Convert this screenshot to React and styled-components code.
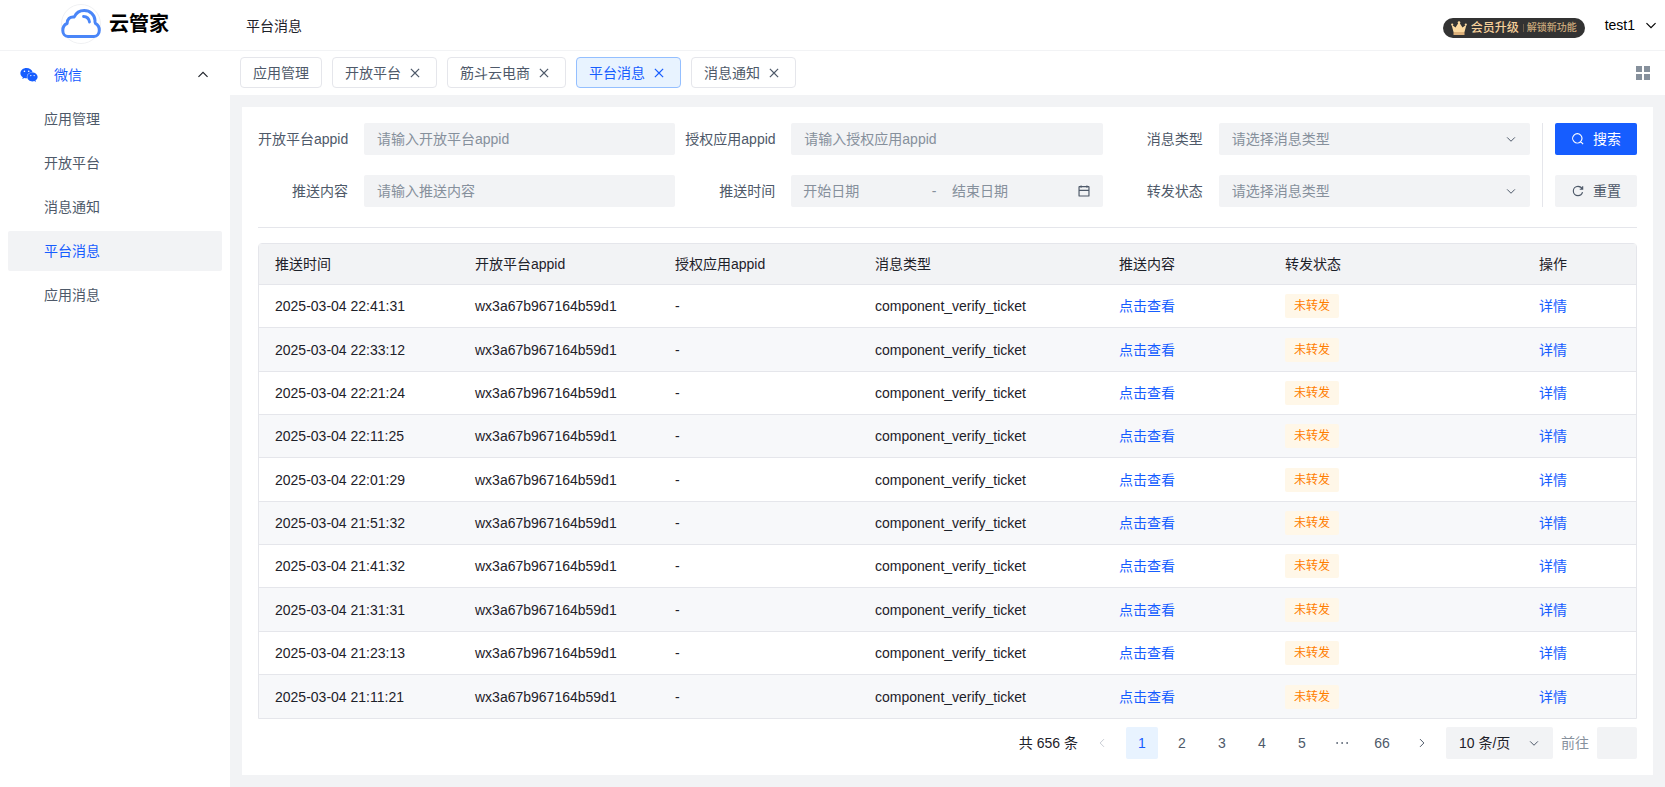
import React from "react";
import styled, { createGlobalStyle, css } from "styled-components";
import { FaWeixin } from "react-icons/fa";

const c = {
  text: "#1d2129",
  text2: "#4e5969",
  text3: "#86909c",
  text4: "#c9cdd4",
  border: "#e5e6eb",
  fill: "#f2f3f5",
  primary: "#165dff",
  primaryLight: "#e8f3ff",
};

const GlobalStyle = createGlobalStyle`
  * { box-sizing: border-box; }
  body {
    margin: 0;
    color: ${c.text};
    background: #fff;
    font-family: "Liberation Sans", "Noto Sans CJK SC", sans-serif;
    font-size: 14px;
    line-height: 22px;
  }
  button, input, select { font: inherit; color: inherit; border: 0; padding: 0; background: none; outline: none; }
  button { cursor: pointer; }
  a { color: ${c.primary}; text-decoration: none; }
  ul { list-style: none; margin: 0; padding: 0; }
`;

/* ---------- icons ---------- */

const Svg = styled.svg`
  display: block;
  flex: none;
  fill: none;
  stroke: currentColor;
  stroke-width: 4;
`;

const PATHS = {
  down: "M39.6 17.443 24.043 33 8.487 17.443",
  up: "M39.6 30.557 24.043 15 8.487 30.557",
  left: "M32 8.4 16.444 23.956 32 39.513",
  right: "m16 39.513 15.556-15.557L16 8.4",
  close: "M9.857 9.858 24 24m0 0 14.142 14.142M24 24 38.142 9.858M24 24 9.857 38.142",
  search:
    "M33.072 33.071c6.248-6.248 6.248-16.379 0-22.627-6.249-6.249-16.38-6.249-22.628 0-6.248 6.248-6.248 16.379 0 22.627 6.248 6.248 16.38 6.248 22.628 0Zm0 0 8.485 8.485",
  refresh:
    "M38.837 18C36.463 12.136 30.715 8 24 8 15.163 8 8 15.163 8 24s7.163 16 16 16c7.455 0 13.72-5.1 15.496-12M40 8v10H30",
  calendar:
    "M7 22h34M14 5v8m20-8v8M8 41h32a1 1 0 0 0 1-1V10a1 1 0 0 0-1-1H8a1 1 0 0 0-1 1v30a1 1 0 0 0 1 1Z",
  more: "M37 24h5M22 24h5M7 24h5",
};

const Icon = ({ name, size = 14 }) => (
  <Svg viewBox="0 0 48 48" width={size} height={size} aria-hidden="true">
    <path d={PATHS[name]} />
  </Svg>
);

const CloudLogo = () => (
  <svg width="40" height="40" viewBox="0 0 40 40" aria-hidden="true">
    <circle cx="20" cy="20" r="19.5" fill="#fff" stroke="#f0f1f3" strokeWidth="1" />
    <path
      d="M7 32.500C3.800 32.500 1.800 29.500 1.800 26.500c0-3.600 1.600-5.900 4.300-7C6 15 9 12.300 13.200 13 15 9 18.600 6.500 23.200 6.500c6 0 10.400 4.300 10.800 9.800-.2 1.200-.2 2.200.4 3 2.500 1.300 3.900 3.900 3.900 6.900 0 3.500-2.200 6.300-5.300 6.300Z"
      fill="none" stroke="#4a86f8" strokeWidth="3" strokeLinejoin="round"
    />
    <path d="M22.500 12.500c3.500.2 5.500 2.200 6 5.500" fill="none" stroke="#4a86f8" strokeWidth="2.800" strokeLinecap="round" />
  </svg>
);

const Crown = () => (
  <svg width="16" height="14" viewBox="0 0 16 14" aria-hidden="true">
    <path d="M.5 3.500 4.500 6.500 8 1l3.500 5.500 4-3L13.500 11h-11Z" fill="#fbd9a0" />
    <circle cx="8" cy="1.500" r="1.300" fill="#fbd9a0" />
    <circle cx="1.200" cy="3.500" r="1.100" fill="#fbd9a0" />
    <circle cx="14.800" cy="3.500" r="1.100" fill="#fbd9a0" />
    <path d="M2.500 11h11v3h-11Z" fill="#dcb07a" />
  </svg>
);

const GridIcon = () => (
  <svg width="14" height="14" viewBox="0 0 14 14" fill="currentColor" aria-hidden="true">
    <path d="M0 0h6v6H0ZM8 0h6v6H8ZM0 8h6v6H0ZM8 8h6v6H8Z" />
  </svg>
);

/* ---------- frame ---------- */

const Page = styled.div`
  display: flex;
  flex-direction: column;
  min-height: 100vh;
`;

const Header = styled.header`
  display: flex;
  align-items: center;
  height: 51px;
  padding-right: 7px;
  border-bottom: 1px solid ${c.fill};
`;

const Brand = styled.div`
  display: flex;
  align-items: center;
  justify-content: center;
  gap: 8px;
  width: 230px;
  padding-bottom: 2px;
  color: #000;
  font-size: 20px;
  font-weight: 700;
  line-height: 28px;
`;

const Title = styled.h1`
  flex: 1;
  margin: 0;
  padding: 2px 0 0 16px;
  font-size: 14px;
  font-weight: 400;
`;

const VipButton = styled.button`
  display: flex;
  align-items: center;
  gap: 4px;
  height: 20px;
  margin: 6px 20px 0 0;
  padding: 0 8px;
  border-radius: 10px;
  background: #333;
  color: #f6d09a;
  font-size: 12px;
  font-weight: 500;
  line-height: 20px;
`;

const VipNote = styled.span`
  display: flex;
  align-items: center;
  gap: 3px;
  color: #c9a77a;
  font-size: 10px;

  &::before {
    content: "";
    width: 1px;
    height: 8px;
    background: #6b5c48;
  }
`;

const UserButton = styled.button`
  display: flex;
  align-items: center;
  gap: 9px;
  color: #000;
`;

const Body = styled.div`
  display: flex;
  flex: 1;
`;

/* ---------- side menu ---------- */

const Sidebar = styled.nav`
  flex: none;
  width: 230px;
  padding: 4px 8px;
`;

const MenuGroup = styled.button`
  display: flex;
  align-items: center;
  gap: 16px;
  width: 100%;
  height: 40px;
  padding: 0 12px;
  color: ${c.primary};
  text-align: left;

  span { flex: 1; }
  ${Svg} { color: ${c.text}; }
`;

const MenuList = styled.ul`
  display: flex;
  flex-direction: column;
  gap: 4px;
  padding-top: 4px;
`;

const MenuLink = styled.a`
  display: block;
  padding: 0 36px;
  border-radius: 2px;
  line-height: 40px;
  color: ${(p) => (p.$active ? c.primary : c.text2)};
  background: ${(p) => (p.$active ? c.fill : "transparent")};
`;

/* ---------- tabs ---------- */

const Main = styled.main`
  display: flex;
  flex-direction: column;
  flex: 1;
  min-width: 0;
  background: ${c.fill};
`;

const TabBar = styled.div`
  display: flex;
  align-items: flex-start;
  gap: 10px;
  padding: 6px 15px 7px 10px;
  background: #fff;
`;

const Tab = styled.div`
  display: flex;
  align-items: center;
  gap: 6px;
  height: 31px;
  padding: 0 12px;
  border: 1px solid ${(p) => (p.$active ? "#94bfff" : c.border)};
  border-radius: 4px;
  color: ${(p) => (p.$active ? c.primary : c.text2)};
  background: ${(p) => (p.$active ? c.primaryLight : "#fff")};
  line-height: 28px;
  white-space: nowrap;
`;

const TabClose = styled.button`
  display: grid;
  place-items: center;
  width: 16px;
  height: 16px;
  margin-right: 1px;
`;

const GridButton = styled.button`
  display: flex;
  align-self: center;
  margin-left: auto;
  color: ${c.text3};
`;

/* ---------- content ---------- */

const Card = styled.section`
  flex: 1;
  margin: 12px;
  padding: 16px;
  background: #fff;
`;

const SearchForm = styled.form`
  display: flex;
  padding-bottom: 20px;
  margin-bottom: 15px;
  border-bottom: 1px solid ${c.border};
`;

const Fields = styled.div`
  display: grid;
  flex: 1;
  grid-template-columns: repeat(3, minmax(0, 1fr));
  gap: 20px 10px;
`;

const Field = styled.div`
  display: grid;
  grid-template-columns: 90px minmax(0, 1fr);
  align-items: center;
  column-gap: 16px;
`;

const Label = styled.label`
  color: ${c.text2};
  text-align: right;
  white-space: nowrap;
`;

const control = css`
  width: 100%;
  height: 32px;
  border-radius: 2px;
  background: ${c.fill};
`;

const TextInput = styled.input`
  ${control}
  min-width: 0;
  padding: 0 13px;
  &::placeholder { color: ${c.text3}; opacity: 1; }
`;

const SelectBox = styled.div`
  position: relative;
  min-width: 0;
  width: ${(p) => p.$width || "100%"};
  color: ${c.text2};

  ${Svg} {
    position: absolute;
    top: 10px;
    right: 13px;
    pointer-events: none;
  }
`;

const Select = styled.select`
  ${control}
  display: block;
  appearance: none;
  padding: 0 30px 0 13px;
  color: ${(p) => (p.$placeholder ? c.text3 : c.text)};
`;

const DateRange = styled.div`
  ${control}
  display: flex;
  align-items: center;
  padding: 0 12px 0 4px;
  color: ${c.text2};
`;

const DateInput = styled.input`
  flex: 1;
  min-width: 0;
  padding: 0 8px;
  &::placeholder { color: ${c.text3}; opacity: 1; }
`;

const DateDash = styled.span`
  width: 20px;
  text-align: center;
  color: ${c.text3};
`;

const DateButton = styled.button`
  display: flex;
  margin-left: 4px;
`;

const Actions = styled.div`
  display: flex;
  flex-direction: column;
  gap: 20px;
  margin-left: 12px;
  padding-left: 12px;
  border-left: 1px solid ${c.border};
`;

const ActionButton = styled.button`
  display: flex;
  align-items: center;
  justify-content: center;
  gap: 8px;
  width: 82px;
  height: 32px;
  border-radius: 2px;
  color: ${(p) => (p.$primary ? "#fff" : c.text2)};
  background: ${(p) => (p.$primary ? c.primary : c.fill)};
`;

/* ---------- table ---------- */

const Table = styled.table`
  width: 100%;
  table-layout: fixed;
  border: 1px solid ${c.border};
  border-radius: 4px 4px 0 0;
  border-collapse: separate;
  border-spacing: 0;
`;

const Th = styled.th`
  height: 41px;
  padding: 0 16px;
  border-bottom: 1px solid ${c.border};
  background: ${c.fill};
  font-weight: 400;
  text-align: left;
`;

const Td = styled.td`
  padding: 0 16px;
  border-bottom: 1px solid ${c.border};
`;

const Row = styled.tr`
  height: 43px;
  &:nth-child(3n + 2) { height: 44px; }
  &:nth-child(even) { background: #f7f8fa; }
  &:last-child ${Td} { border-bottom: 0; }
`;

const Tag = styled.span`
  display: block;
  width: fit-content;
  padding: 0 9px;
  border-radius: 2px;
  color: #ff7d00;
  background: #fff7e8;
  font-size: 12px;
  line-height: 24px;
`;

/* ---------- pagination ---------- */

const Pagination = styled.nav`
  display: flex;
  align-items: center;
  justify-content: flex-end;
  gap: 8px;
  margin-top: 8px;
`;

const PageButton = styled.button`
  display: grid;
  place-items: center;
  width: 32px;
  height: 32px;
  border-radius: 2px;
  color: ${(p) => (p.$active ? c.primary : c.text2)};
  background: ${(p) => (p.$active ? c.primaryLight : "transparent")};
  &:disabled { color: ${c.text4}; }
`;

const JumpLabel = styled.label`
  color: ${c.text3};
`;

const JumpInput = styled.input`
  ${control}
  width: 40px;
  padding: 0 8px;
  text-align: center;
`;

/* ---------- data ---------- */

const MENU = ["应用管理", "开放平台", "消息通知", "平台消息", "应用消息"];
const TABS = ["应用管理", "开放平台", "筋斗云电商", "平台消息", "消息通知"];
const CURRENT = "平台消息";

const COLUMNS = [
  ["推送时间", 200],
  ["开放平台appid", 200],
  ["授权应用appid", 200],
  ["消息类型", 244],
  ["推送内容", 166],
  ["转发状态", 254],
  ["操作", 113],
];

const TIMES = [
  "22:41:31", "22:33:12", "22:21:24", "22:11:25", "22:01:29",
  "21:51:32", "21:41:32", "21:31:31", "21:23:13", "21:11:21",
];

const TextField = ({ id, label, placeholder }) => (
  <Field>
    <Label htmlFor={id}>{label}</Label>
    <TextInput id={id} type="text" placeholder={placeholder} />
  </Field>
);

const SelectField = ({ id, label, placeholder }) => (
  <Field>
    <Label htmlFor={id}>{label}</Label>
    <SelectBox>
      <Select id={id} $placeholder defaultValue="">
        <option value="">{placeholder}</option>
      </Select>
      <Icon name="down" size={12} />
    </SelectBox>
  </Field>
);

export default function App() {
  return (
    <Page>
      <GlobalStyle />
      <Header>
        <Brand>
          <CloudLogo />
          云管家
        </Brand>
        <Title>平台消息</Title>
        <VipButton type="button">
          <Crown />
          会员升级
          <VipNote>解锁新功能</VipNote>
        </VipButton>
        <UserButton type="button">
          test1
          <Icon name="down" />
        </UserButton>
      </Header>
      <Body>
        <Sidebar aria-label="主菜单">
          <MenuGroup type="button" aria-expanded="true">
            <FaWeixin size={18} />
            <span>微信</span>
            <Icon name="up" />
          </MenuGroup>
          <MenuList>
            {MENU.map((m) => (
              <li key={m}>
                <MenuLink href="#" $active={m === CURRENT}>{m}</MenuLink>
              </li>
            ))}
          </MenuList>
        </Sidebar>
        <Main>
          <TabBar>
            {TABS.map((t, i) => (
              <Tab key={t} $active={t === CURRENT}>
                {t}
                {i > 0 && (
                  <TabClose type="button" aria-label={`关闭${t}`}>
                    <Icon name="close" />
                  </TabClose>
                )}
              </Tab>
            ))}
            <GridButton type="button" aria-label="标签操作">
              <GridIcon />
            </GridButton>
          </TabBar>
          <Card>
            <SearchForm onSubmit={(e) => e.preventDefault()}>
              <Fields>
                <TextField id="open-appid" label="开放平台appid" placeholder="请输入开放平台appid" />
                <TextField id="auth-appid" label="授权应用appid" placeholder="请输入授权应用appid" />
                <SelectField id="msg-type" label="消息类型" placeholder="请选择消息类型" />
                <TextField id="content" label="推送内容" placeholder="请输入推送内容" />
                <Field>
                  <Label htmlFor="date-start">推送时间</Label>
                  <DateRange>
                    <DateInput id="date-start" type="text" placeholder="开始日期" />
                    <DateDash>-</DateDash>
                    <DateInput type="text" placeholder="结束日期" aria-label="结束日期" />
                    <DateButton type="button" aria-label="选择日期">
                      <Icon name="calendar" />
                    </DateButton>
                  </DateRange>
                </Field>
                <SelectField id="forward" label="转发状态" placeholder="请选择消息类型" />
              </Fields>
              <Actions>
                <ActionButton type="submit" $primary>
                  <Icon name="search" />
                  搜索
                </ActionButton>
                <ActionButton type="reset">
                  <Icon name="refresh" />
                  重置
                </ActionButton>
              </Actions>
            </SearchForm>
            <Table>
              <colgroup>
                {COLUMNS.map(([name, width]) => (
                  <col key={name} width={width} />
                ))}
              </colgroup>
              <thead>
                <tr>
                  {COLUMNS.map(([name]) => (
                    <Th key={name} scope="col">{name}</Th>
                  ))}
                </tr>
              </thead>
              <tbody>
                {TIMES.map((t) => (
                  <Row key={t}>
                    <Td>2025-03-04 {t}</Td>
                    <Td>wx3a67b967164b59d1</Td>
                    <Td>-</Td>
                    <Td>component_verify_ticket</Td>
                    <Td><a href="#">点击查看</a></Td>
                    <Td><Tag>未转发</Tag></Td>
                    <Td><a href="#">详情</a></Td>
                  </Row>
                ))}
              </tbody>
            </Table>
            <Pagination aria-label="分页">
              <span>共 656 条</span>
              <PageButton type="button" disabled aria-label="上一页">
                <Icon name="left" size={12} />
              </PageButton>
              {[1, 2, 3, 4, 5].map((n) => (
                <PageButton key={n} type="button" $active={n === 1}>{n}</PageButton>
              ))}
              <PageButton type="button" aria-label="更多页">
                <Icon name="more" size={16} />
              </PageButton>
              <PageButton type="button">66</PageButton>
              <PageButton type="button" aria-label="下一页">
                <Icon name="right" size={12} />
              </PageButton>
              <SelectBox $width="107px">
                <Select aria-label="每页条数" defaultValue="10">
                  <option value="10">10 条/页</option>
                </Select>
                <Icon name="down" size={12} />
              </SelectBox>
              <JumpLabel htmlFor="jump">前往</JumpLabel>
              <JumpInput id="jump" type="text" />
            </Pagination>
          </Card>
        </Main>
      </Body>
    </Page>
  );
}
